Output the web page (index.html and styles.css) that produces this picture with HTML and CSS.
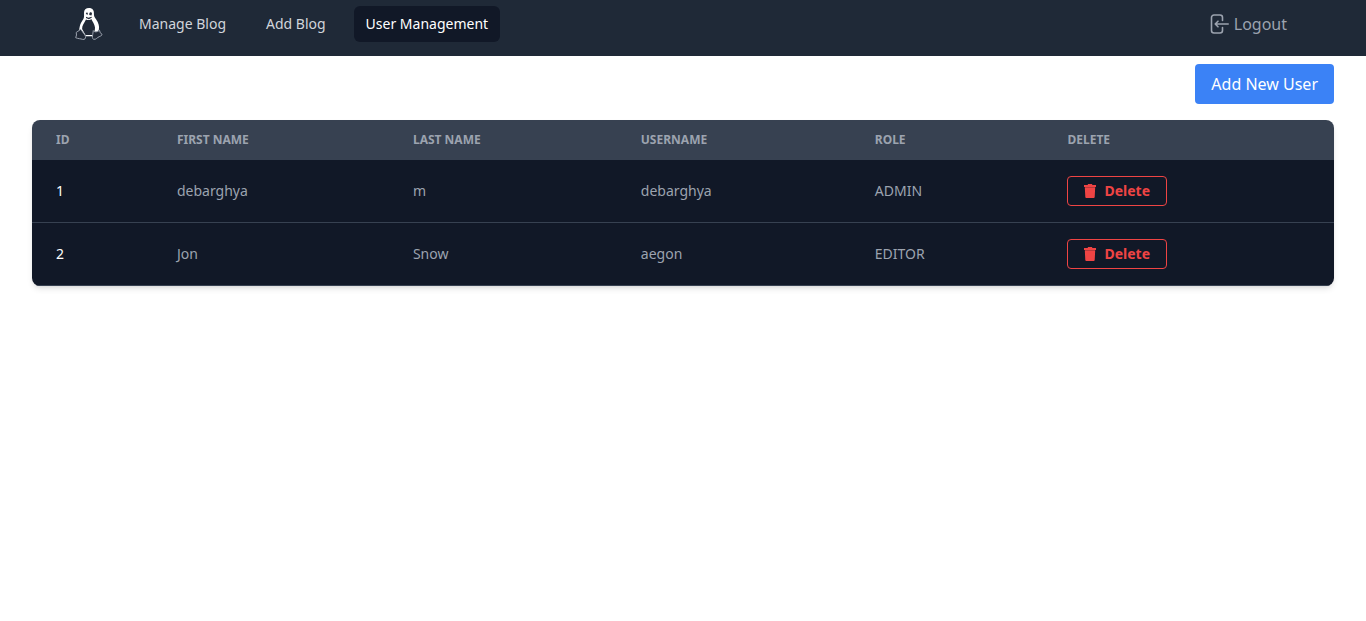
FILE: index.html
```html
<!DOCTYPE html>
<html lang="en">
<head>
<meta charset="utf-8">
<meta name="viewport" content="width=device-width, initial-scale=1">
<title>User Management</title>
<link rel="stylesheet" href="styles.css">
</head>
<body>
<nav class="navbar">
  <div class="navbar-inner">
    <svg class="logo" viewBox="0 0 28 32" aria-hidden="true">
      <path fill="#fff" d="M14 0c-3.200 0-5 1.900-5 4.800 0 2.700.4 4.300-.6 6.200-1.600 2.600-3 4.500-3.600 7.300-.4 1.700-.4 3-1 4.500l5 3.500 2.500 2h6l2-2 4.500-4.400c.9-3.400-.3-7.400-2.600-10.500C19.300 8.900 18.900 8.200 18.900 4.800 18.900 2.300 17.500 0 14 0z"/>
      <path fill="#212937" d="M11 11.500c1.800.9 4.200.8 5.300-.5 1.200 2.500 3.400 5.300 3.700 8.600.1 2.700-.9 4.900-2 7.400h-7.500l-3.400-6c-.2-3.500 2.200-6.200 3.900-9.500z"/>
      <path fill="#212937" d="M10.800 5.200c.8-1.200 1.900-1 2.100.7l-.8 1.200zM14.300 5.700c.4-1.900 2.400-1.900 2.700 0l-.6 1.700-2.100-.4zM11 8.700l2.400 1 3.300-1v1l-2.900 1.600-2.800-1.200z"/>
      <path fill="#212937" stroke="#9ca3af" stroke-width="1" stroke-linejoin="round" d="M4.500 22c-.8 1.500-2.200 1.200-3.300 2.500l.3 2.500-.8 2.700c2.600 1.200 4.700.9 7 1.700 2 .4 3-.9 2.900-2.900-.8-2.300-2.700-4-4-6-.6-1-1.400-1.300-2.100-.5zM18.300 22.600l-.6 4c-.3 1.900-.8 4.100 1 4.700 2.500.5 3.300-1.800 5.500-2.600 1.300-.6 3.300-1.400 2.800-2.400l-1.800-1.600-.7-2.500c-1.800 1.700-4.900 2.400-6.200.4z"/>
    </svg>
    <div class="nav-links">
      <a class="nav-link" href="#manage">Manage Blog</a>
      <a class="nav-link" href="#add">Add Blog</a>
      <a class="nav-link active" href="#users" aria-current="page">User Management</a>
    </div>
    <button class="logout" type="button">
      <svg class="logout-icon" viewBox="0 0 20 20" fill="none" stroke="currentColor" stroke-width="1.600" stroke-linecap="round" stroke-linejoin="round" aria-hidden="true">
        <path d="M12.500 6.500V3.500a2.500 2.500 0 0 0-2.500-2.500H4A2.500 2.500 0 0 0 1.500 3.500v13A2.500 2.500 0 0 0 4 19h6a2.500 2.500 0 0 0 2.500-2.500v-3M18.200 10H5.200M8 7.200 5.200 10 8 12.800"/>
      </svg>
      Logout
    </button>
  </div>
</nav>
<main class="content">
  <div class="toolbar">
    <button class="add-user" type="button">Add New User</button>
  </div>
  <div class="table-card">
    <table class="users">
      <thead>
        <tr><th scope="col">ID</th><th scope="col">First name</th><th scope="col">Last name</th><th scope="col">Username</th><th scope="col">Role</th><th scope="col">Delete</th></tr>
      </thead>
      <tbody>
        <tr>
          <th scope="row">1</th><td>debarghya</td><td>m</td><td>debarghya</td><td>ADMIN</td>
          <td><button class="delete" type="button"><svg class="trash" viewBox="0 0 12 14" fill="currentColor" aria-hidden="true"><path d="M0 1h3.500l.7-1h3.600l.7 1H12v2H0zM.8 3.300h10.400l-.5 9.700q-.1 1-1 1H2.300q-.9 0-1-1z"/></svg>Delete</button></td>
        </tr>
        <tr>
          <th scope="row">2</th><td>Jon</td><td>Snow</td><td>aegon</td><td>EDITOR</td>
          <td><button class="delete" type="button"><svg class="trash" viewBox="0 0 12 14" fill="currentColor" aria-hidden="true"><path d="M0 1h3.500l.7-1h3.600l.7 1H12v2H0zM.8 3.300h10.400l-.5 9.700q-.1 1-1 1H2.300q-.9 0-1-1z"/></svg>Delete</button></td>
        </tr>
      </tbody>
    </table>
  </div>
</main>
</body>
</html>
```
FILE: styles.css
```css
* { box-sizing: border-box; }

body {
  margin: 0;
  background: #fff;
  font: 16px/24px "Noto Sans", sans-serif;
}

button { font: inherit; cursor: pointer; }

.navbar { background: #1f2937; }

.navbar-inner {
  display: flex;
  align-items: center;
  max-width: 1280px;
  margin: 0 auto;
  padding: 6px 32px 14px;
}

.logo { width: 28px; height: 32px; }

.nav-links {
  display: flex;
  gap: 16px;
  margin-left: 24px;
}

.nav-link {
  padding: 8px 12px;
  border-radius: 6px;
  color: #d1d5db;
  font-size: 14px;
  line-height: 20px;
  text-decoration: none;
}

.nav-link.active { background: #111827; color: #fff; }

.logout {
  display: flex;
  align-items: center;
  gap: 4px;
  margin-left: auto;
  padding: 4px;
  border: 0;
  background: none;
  color: #9ca3af;
}

.logout-icon { width: 20px; height: 20px; }

.content { padding: 8px 32px; }

.toolbar {
  display: flex;
  justify-content: flex-end;
  margin-bottom: 16px;
}

.add-user {
  padding: 8px 16px;
  border: 0;
  border-radius: 4px;
  background: #3b82f6;
  color: #fff;
}

.table-card {
  overflow: hidden;
  border-radius: 8px;
  box-shadow: 0 4px 6px -1px rgb(0 0 0 / 10%), 0 2px 4px -2px rgb(0 0 0 / 10%);
}

.users {
  width: 100%;
  border-collapse: collapse;
  color: #9ca3af;
  font-size: 14px;
  line-height: 20px;
  text-align: left;
}

.users thead {
  background: #374151;
  font-size: 12px;
  line-height: 16px;
  text-transform: uppercase;
}

.users thead th { padding: 12px 24px; font-weight: 700; }

.users tbody tr {
  background: #111827;
  border-bottom: 1px solid #374151;
}

.users tbody th,
.users tbody td { padding: 16px 24px; }

.users tbody th { color: #fff; font-weight: 400; }

.delete {
  display: flex;
  align-items: center;
  gap: 8px;
  padding: 4px 16px;
  border: 1px solid #ef4444;
  border-radius: 4px;
  background: transparent;
  color: #ef4444;
  font-weight: 700;
}

.trash { width: 12px; height: 14px; }
```
